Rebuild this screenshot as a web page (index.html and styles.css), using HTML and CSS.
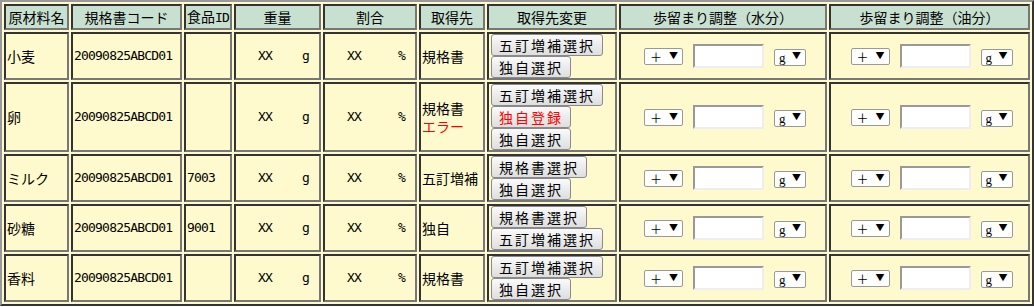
FILE: index.html
```html
<!DOCTYPE html>
<html lang="ja">
<head>
    <meta charset="UTF-8">
    <title>原材料一覧</title>
    <link rel="stylesheet" href="styles.css">
</head>
<body>
    <!-- 原材料テーブル -->
    <table class="recipe">
        <tr>
            <th class="c-name">原材料名</th>
            <th class="c-code">規格書コード</th>
            <th class="c-id">食品<span class="lat">ID</span></th>
            <th class="c-weight">重量</th>
            <th class="c-rate">割合</th>
            <th class="c-src">取得先</th>
            <th class="c-change">取得先変更</th>
            <th class="c-water">歩留まり調整（水分）</th>
            <th class="c-oil">歩留まり調整（油分）</th>
        </tr>
        <tr>
            <td>小麦</td>
            <td class="lat">20090825ABCD01</td>
            <td></td>
            <td><div class="unit lat"><span>XX</span><span>g</span></div></td>
            <td><div class="unit lat"><span>XX</span><span>%</span></div></td>
            <td>規格書</td>
            <td><div class="btns"><button>五訂増補選択</button><button>独自選択</button></div></td>
            <td><div class="adjust"><span class="sel"><select><option>＋</option></select></span><input type="text"><span class="sel"><select class="g"><option>g</option></select></span></div></td>
            <td><div class="adjust"><span class="sel"><select><option>＋</option></select></span><input type="text"><span class="sel"><select class="g"><option>g</option></select></span></div></td>
        </tr>
        <tr class="tall">
            <td>卵</td>
            <td class="lat">20090825ABCD01</td>
            <td></td>
            <td><div class="unit lat"><span>XX</span><span>g</span></div></td>
            <td><div class="unit lat"><span>XX</span><span>%</span></div></td>
            <td>規格書<br><span class="error">エラー</span></td>
            <td><div class="btns"><button>五訂増補選択</button><button class="error">独自登録</button><button>独自選択</button></div></td>
            <td><div class="adjust"><span class="sel"><select><option>＋</option></select></span><input type="text"><span class="sel"><select class="g"><option>g</option></select></span></div></td>
            <td><div class="adjust"><span class="sel"><select><option>＋</option></select></span><input type="text"><span class="sel"><select class="g"><option>g</option></select></span></div></td>
        </tr>
        <tr>
            <td>ミルク</td>
            <td class="lat">20090825ABCD01</td>
            <td class="lat">7003</td>
            <td><div class="unit lat"><span>XX</span><span>g</span></div></td>
            <td><div class="unit lat"><span>XX</span><span>%</span></div></td>
            <td>五訂増補</td>
            <td><div class="btns"><button>規格書選択</button><button>独自選択</button></div></td>
            <td><div class="adjust"><span class="sel"><select><option>＋</option></select></span><input type="text"><span class="sel"><select class="g"><option>g</option></select></span></div></td>
            <td><div class="adjust"><span class="sel"><select><option>＋</option></select></span><input type="text"><span class="sel"><select class="g"><option>g</option></select></span></div></td>
        </tr>
        <tr>
            <td>砂糖</td>
            <td class="lat">20090825ABCD01</td>
            <td class="lat">9001</td>
            <td><div class="unit lat"><span>XX</span><span>g</span></div></td>
            <td><div class="unit lat"><span>XX</span><span>%</span></div></td>
            <td>独自</td>
            <td><div class="btns"><button>規格書選択</button><button>五訂増補選択</button></div></td>
            <td><div class="adjust"><span class="sel"><select><option>＋</option></select></span><input type="text"><span class="sel"><select class="g"><option>g</option></select></span></div></td>
            <td><div class="adjust"><span class="sel"><select><option>＋</option></select></span><input type="text"><span class="sel"><select class="g"><option>g</option></select></span></div></td>
        </tr>
        <tr>
            <td>香料</td>
            <td class="lat">20090825ABCD01</td>
            <td></td>
            <td><div class="unit lat"><span>XX</span><span>g</span></div></td>
            <td><div class="unit lat"><span>XX</span><span>%</span></div></td>
            <td>規格書</td>
            <td><div class="btns"><button>五訂増補選択</button><button>独自選択</button></div></td>
            <td><div class="adjust"><span class="sel"><select><option>＋</option></select></span><input type="text"><span class="sel"><select class="g"><option>g</option></select></span></div></td>
            <td><div class="adjust"><span class="sel"><select><option>＋</option></select></span><input type="text"><span class="sel"><select class="g"><option>g</option></select></span></div></td>
        </tr>
    </table>
</body>
</html>
```

FILE: styles.css
```css
/* 共通 */
body {
    margin: 0;
    padding: 0;
    font-family: "Noto Sans CJK JP", sans-serif;
    font-size: 14px;
    color: #000;
    background: #fff;
}

/* 半角英数字 */
.lat {
    font-family: "DejaVu Sans Mono", "Liberation Mono", monospace;
    font-size: 13px;
    letter-spacing: -0.8px;
}

/* テーブル */
.recipe {
    width: 1034px;
    table-layout: fixed;
    border-collapse: separate;
    border-spacing: 2px;
    border: 2px solid;
    border-color: #999 #333 #333 #999;
    background-color: #fffacd;
}

.recipe th,
.recipe td {
    box-sizing: border-box;
    border: 2px solid;
    border-color: #333 #777 #777 #333;
    padding: 0 1px;
    line-height: 18px;
    font-weight: normal;
    white-space: nowrap;
}

.recipe th {
    height: 26px;
    padding: 0;
    background-color: #c8e0d0;
    text-align: center;
}

.recipe td {
    height: 48px;
    background-color: #fffacd;
    text-align: left;
    vertical-align: middle;
}

.recipe tr.tall td {
    height: 70px;
}

/* 列幅 */
.c-name   { width: 65px; }
.c-code   { width: 111px; }
.c-id     { width: 48px; }
.c-weight { width: 87px; }
.c-rate   { width: 94px; }
.c-src    { width: 66px; }
.c-change { width: 130px; }
.c-water  { width: 208px; }
.c-oil    { width: 201px; }

/* 重量・割合 */
.unit {
    display: flex;
    justify-content: space-between;
    padding: 0 9px 0 21px;
}

.error {
    color: #f00;
}

/* ボタン */
.btns {
    display: flex;
    flex-direction: column;
    align-items: flex-start;
    padding-left: 1px;
}

.btns button {
    height: 22px;
    margin: 0;
    padding: 0 7px;
    font-family: inherit;
    font-size: 14px;
    letter-spacing: 2px;
    line-height: 18px;
    color: #000;
    border: 1px solid #8a8a8a;
    border-radius: 3px;
    background: linear-gradient(#fafafa, #dedede);
}

.btns button.error {
    color: #f00;
}

/* 歩留まり調整 */
.adjust {
    display: flex;
    justify-content: center;
    align-items: center;
    gap: 10px;
    padding-left: 4px;
}

.sel {
    position: relative;
    display: inline-block;
}

.sel::after {
    content: "▼";
    position: absolute;
    right: 5px;
    top: 3px;
    font-size: 9px;
    line-height: 12px;
    pointer-events: none;
}

.sel select {
    appearance: none;
    -webkit-appearance: none;
    box-sizing: border-box;
    width: 39px;
    height: 17px;
    margin: 0;
    padding: 0 0 0 5px;
    font-family: "Noto Sans CJK JP", sans-serif;
    font-size: 12px;
    line-height: 15px;
    color: #000;
    background: #fff;
    border: 1px solid #999;
    border-radius: 2px;
}

.sel select.g {
    width: 32px;
    padding-left: 4px;
    font-family: "Liberation Serif", serif;
    font-size: 13px;
}

.adjust input {
    box-sizing: border-box;
    width: 71px;
    height: 24px;
    margin: 0;
    border: 2px solid;
    border-color: #999 #eee #eee #999;
    background: #fff;
}
```
